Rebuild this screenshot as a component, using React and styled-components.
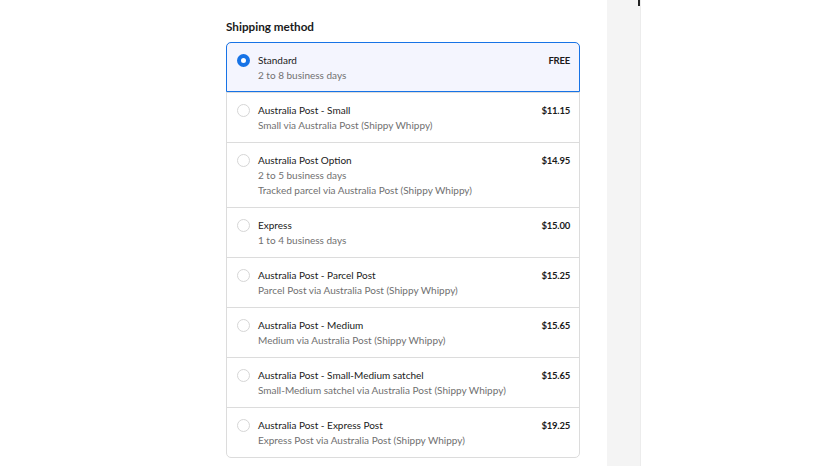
import styled, { createGlobalStyle } from "styled-components";

const GlobalStyle = createGlobalStyle`
  html, body {
    margin: 0;
    padding: 0;
    background: #ffffff;
    font-family: Lato, "Noto Sans", Arial, sans-serif;
    color: #1f1f1f;
  }
`;

const options = [
  { title: "Standard", lines: ["2 to 8 business days"], price: "FREE", selected: true },
  { title: "Australia Post - Small", lines: ["Small via Australia Post (Shippy Whippy)"], price: "$11.15" },
  {
    title: "Australia Post Option",
    lines: ["2 to 5 business days", "Tracked parcel via Australia Post (Shippy Whippy)"],
    price: "$14.95",
  },
  { title: "Express", lines: ["1 to 4 business days"], price: "$15.00" },
  { title: "Australia Post - Parcel Post", lines: ["Parcel Post via Australia Post (Shippy Whippy)"], price: "$15.25" },
  { title: "Australia Post - Medium", lines: ["Medium via Australia Post (Shippy Whippy)"], price: "$15.65" },
  {
    title: "Australia Post - Small-Medium satchel",
    lines: ["Small-Medium satchel via Australia Post (Shippy Whippy)"],
    price: "$15.65",
  },
  { title: "Australia Post - Express Post", lines: ["Express Post via Australia Post (Shippy Whippy)"], price: "$19.25" },
];

export default function App() {
  return (
    <>
      <GlobalStyle />
      <Page>
        <Main>
          <Heading>Shipping method</Heading>
          <OptionList>
            {options.map((o) => (
              <Option key={o.title} selected={o.selected}>
                <Radio selected={o.selected} />
                <Details>
                  <Title>{o.title}</Title>
                  {o.lines.map((l) => (
                    <Sub key={l}>{l}</Sub>
                  ))}
                </Details>
                <Price>{o.price}</Price>
              </Option>
            ))}
          </OptionList>
        </Main>
        <Gutter />
        <Aside>
          <Caret />
        </Aside>
      </Page>
    </>
  );
}

const Page = styled.div`
  display: flex;
  height: 466px;
  overflow: hidden;
`;

const Main = styled.div`
  flex: 0 0 607px;
  box-sizing: border-box;
  padding: 19px 27px 0 226px;
`;

const Heading = styled.h2`
  margin: 0 0 8px;
  font-size: 11.7px;
  line-height: 15px;
  font-weight: 700;
  color: #1a1a1a;
`;

const OptionList = styled.div`
  border: 1px solid #dcdcdc;
  border-radius: 5px;
  width: 354px;
  box-sizing: border-box;
`;

const Option = styled.div`
  display: flex;
  align-items: flex-start;
  padding: ${(p) => (p.selected ? "10px 9px 8px 10px" : "10px 9px 9px 10px")};
  margin: ${(p) => (p.selected ? "-1px -1px 0" : "0")};
  border: ${(p) => (p.selected ? "1px solid #1773e6" : "none")};
  border-radius: ${(p) => (p.selected ? "5px 5px 0 0" : "0")};
  background: ${(p) => (p.selected ? "#f4f5fe" : "transparent")};

  & + & {
    border-top: 1px solid #dcdcdc;
  }
`;

const Radio = styled.span`
  flex: 0 0 auto;
  width: 13px;
  height: 13px;
  margin: 1px 8px 0 0;
  box-sizing: border-box;
  border-radius: 50%;
  border: ${(p) => (p.selected ? "4.5px solid #1773e6" : "1px solid #d6d6d6")};
  background: #ffffff;
`;

const Details = styled.div`
  flex: 1;
  display: flex;
  flex-direction: column;
`;

const Title = styled.div`
  font-size: 10px;
  line-height: 15px;
  color: #1a1a1a;
`;

const Sub = styled.div`
  font-size: 10px;
  line-height: 15px;
  color: #707070;
`;

const Price = styled.div`
  font-size: 9.5px;
  line-height: 15px;
  font-weight: 700;
  letter-spacing: -0.2px;
  color: #1a1a1a;
`;

const Gutter = styled.div`
  flex: 0 0 33px;
  background: #f4f4f4;
  border-right: 1px solid #ececec;
`;

const Aside = styled.div`
  flex: 1;
  position: relative;
`;

const Caret = styled.span`
  position: absolute;
  left: -3px;
  top: 0;
  width: 1.5px;
  height: 6px;
  background: #222;
`;
